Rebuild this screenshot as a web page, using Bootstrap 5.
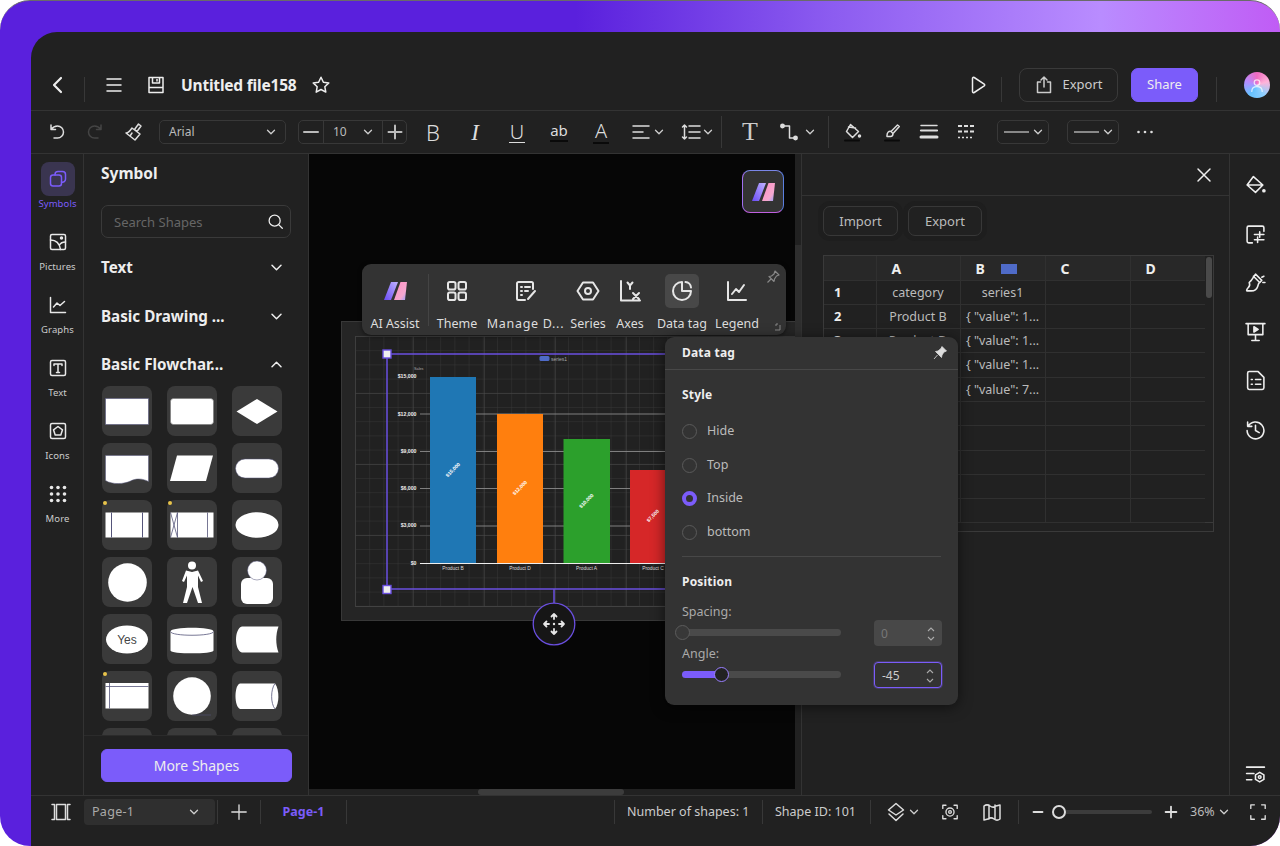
<!DOCTYPE html>
<html lang="en">
<head>
<meta charset="utf-8">
<title>Untitled file158</title>
<link href="https://cdn.jsdelivr.net/npm/bootstrap@5.3.0/dist/css/bootstrap.min.css" rel="stylesheet">
<style>
html,body{margin:0;background:#fff;width:1280px;height:846px;overflow:hidden}
body{font-family:"Noto Sans","Liberation Sans",sans-serif;color:#ddd;font-size:13px}
.frame{width:1280px;height:846px;border-radius:30px;overflow:hidden;padding:31px 0 0 31px;border-top:1px solid #6a6a6a;background:linear-gradient(90deg,#5a20dd 0%,#5a20dd 45%,#8c5cf0 65%,#b98cff 86%,#c05cf5 100%)}
.app{width:1249px;height:814px;background:#212121;border-radius:26px 0 0 0;display:flex;flex-direction:column}
.ic{width:20px;height:20px;fill:none;stroke:currentColor;stroke-width:1.5;stroke-linecap:round;stroke-linejoin:round;flex:none}
.chv{width:10px;height:10px;color:#ccc;flex:none}
.vd{width:1px;background:#383838;flex:none;align-self:center}
.hd{height:79px;padding-top:36px;padding-right:10px;border-bottom:1px solid #333;color:#eee;flex:none}
.hd>div,.hd>button{height:34px}
.b1{width:53px;padding-left:1px}.vd.h25{height:25px}
.b2{width:57px}.b3{width:28px}.ttl{margin-left:11px;font-weight:700;font-size:15.5px;letter-spacing:-.2px;width:120px;white-space:nowrap;line-height:34px}
.b4{width:36px;margin-left:2px}
.b5{width:38px}
.ex-btn{margin-left:17px;width:99px;--bs-btn-padding-x:0;--bs-btn-padding-y:0;--bs-btn-color:#ccc;--bs-btn-border-color:#3a3a3a;--bs-btn-hover-color:#ccc;--bs-btn-font-size:13px;--bs-btn-border-radius:8px}
.sh-btn{margin-left:13px;width:67px;--bs-btn-bg:#7b5cfa;--bs-btn-color:#eee;--bs-btn-border-color:#7b5cfa;--bs-btn-padding-x:0;--bs-btn-padding-y:0;--bs-btn-font-size:13px;--bs-btn-border-radius:7px}
.ml18{margin-left:18px}
.avt{width:26px;height:26px!important;border-radius:50%;margin-left:27px;background:conic-gradient(#f06bc0,#ffb3d9,#8fd0ff,#66c2ff,#b58cff,#f06bc0);color:#fff;margin-top:4px}
.avt .ic{width:16px;height:16px;opacity:.75}
.tb{height:43px;border-bottom:1px solid #333;padding-left:7px;color:#ddd;flex:none}
.ti{height:42px;flex:none}
.w38{width:38px}.w42{width:42px}.w36{width:36px}
.dim{color:#444}
.ghost{height:24px;border:1px solid #383838;border-radius:5px;flex:none;font-size:12px;color:#bbb}
.fsel{width:127px;margin-left:7px;padding:0 9px}
.sgrp{width:109px;margin-left:12px}
.sgrp>span{height:22px}
.s1{width:24px}.s2{width:60px;padding:0 9px 0 9px;border-left:1px solid #383838;border-right:1px solid #383838}.s3{width:23px}
.ml5{margin-left:5px}
.tg{line-height:1;color:#ddd;display:block;text-align:center}
.tg-b{font-size:22px;font-weight:300}
.tg-i{font-family:"Liberation Serif",serif;font-style:italic;font-size:23px}
.tg-u{font-size:20px;font-weight:300;line-height:20px;border-bottom:1.5px solid #ddd;padding:0 1px;height:21px}
.tg-ab{font-size:15px;line-height:17px;border-bottom:2px solid #0a0a0a;height:20px}
.tg-a{font-size:20px;font-weight:300;line-height:20px;border-bottom:2px solid #0a0a0a;height:23px;padding:0 2px}
.tg-t{font-family:"Liberation Serif",serif;font-size:26px;line-height:26px;color:#ccc}
.alg{width:38px;margin-left:4px;gap:3px}
.lsp{width:40px;margin-left:9px;gap:2px}
.vd.h32{height:32px}
.conn{width:40px;margin-left:10px;gap:6px}
.ml9b{margin-left:9px}
.ml2b{margin-left:2px}
.lsel{width:52px;padding:0 5px 0 6px;gap:4px}
.ml12{margin-left:12px}.ml18b{margin-left:18px}
.lsel i{display:block;height:1.5px;width:28px;background:#888}
.dots{width:36px;margin-left:8px}
.mainr{flex:1 1 0;min-height:0}
.rail{width:53px;padding-top:8px;padding-left:1px;border-right:1px solid #333;flex:none;color:#e8e8e8}
.ri{height:63px;width:51px}
.rb{width:34px;height:34px;border-radius:8px}
.rb.on{background:#3a3550;color:#7b5cfa}
.rl{font-size:9.5px;line-height:13px;margin-top:1px;color:#ccc;letter-spacing:.1px}
.rl.on{color:#7b5cfa}
.side{width:225px;border-right:1px solid #333;flex:none}
.sbody{flex:1 1 0;min-height:0;overflow:hidden;padding:0 17px}
.stitle{height:38px;line-height:38px;font-weight:700;font-size:15.500px;color:#eee}
.ssrch{margin-top:13px;width:190px;position:relative}
.ssrch .form-control{height:33px;background:transparent;border:1px solid #3a3a3a;border-radius:7px;color:#ccc;font-size:13px;padding:0 12px;box-shadow:none}
.ssrch .form-control::placeholder{color:#666}
.ssrch .ic{position:absolute;right:7px;top:8px;width:17px;height:17px;color:#eee}
.shd{height:30px;font-weight:700;font-size:15.200px;color:#eee;margin-bottom:19px;width:186px}
.shd.first{margin-top:14px}
.shd.mid{margin-bottom:18.500px}
.shd.last{margin-bottom:6.500px}
.shd .ic{width:15px;height:15px;margin-right:3px}
.tiles{display:grid;grid-template-columns:repeat(3,50px);gap:7px 15px;margin-left:1px}
.tile{height:50px;background:#3a3a3a;border-radius:8px}
.tile svg{display:block;width:50px;height:50px}
.sfoot{height:60px;border-top:1px solid #2b2b2b;padding:13px 0 0 17px;flex:none}
.ms-btn{width:191px;height:33px;--bs-btn-bg:#7b5cfa;--bs-btn-color:#eee;--bs-btn-border-color:#7b5cfa;--bs-btn-padding-x:0;--bs-btn-padding-y:0;--bs-btn-font-size:14px;--bs-btn-border-radius:6px}
.stagew{width:486px;flex:none;position:relative;z-index:2;display:flex;flex-direction:column}
.view{flex:1 1 0;background:#060606;position:relative;overflow:hidden}
.view svg.chart{position:absolute;left:0;top:0;width:486px;height:635px}
.hsb{height:6px;flex:none}
.hsb i{display:block;margin-left:169px;width:146px;height:6px;background:#3c3c3c;border-radius:3px}
.vsb{width:7px;flex:none;border-right:1px solid #333}
.vsb i{display:block;margin-top:91px;width:6px;height:95px;background:#2e2e2e}
.logo{position:absolute;left:433px;top:16px;width:42px;height:43px;border-radius:8px;background:#333;border:1.5px solid;border-color:#7a86e8 #5a7fe0 #c060e0 #a070f0}
.logo svg{width:24px;height:24px}
.ftb{position:absolute;left:53px;top:110px;width:424px;height:71px;background:#333;border-radius:9px;box-shadow:0 1px 4px rgba(0,0,0,.5);color:#e6e6e6}
.fi{height:71px;padding-top:10px;flex:none}
.fi .box{height:34px;width:34px;border-radius:5px}
.fi .box .ic{width:24px;height:24px;stroke-width:2}
.fi .box.on{background:#484848}
.fi span.lb{font-size:12.5px;line-height:16px;margin-top:8px;white-space:nowrap;color:#ddd}
.fi span.lb.wd{letter-spacing:.7px}
.fa{width:66px}.fb{width:56px}.fc{width:81px}.fd{width:44px}.fe{width:40px}.ff{width:64px}.fg{width:46px}
.vd.h52{height:52px;background:#444}
.pin{position:absolute;right:6px;top:6px;width:14px;height:14px;color:#888}
.grip{position:absolute;right:5px;bottom:4px;width:9px;height:9px;color:#888}
.pop{position:absolute;left:356px;top:183px;width:293px;height:368px;background:#333;border-radius:9px;box-shadow:0 2px 14px rgba(0,0,0,.55);font-size:12.5px}
.phd{height:33px;border-bottom:1px solid #484848;padding:0 11px 0 17px;font-weight:700;font-size:12px;color:#eee;letter-spacing:.2px}
.phd svg{width:14px;height:14px;color:#ddd}
.pbd{padding:0 17px}
.pst{font-weight:700;font-size:12px;color:#eee;letter-spacing:.2px;height:18px;line-height:18px}
.pst.a{margin-top:16px;margin-bottom:10.500px}
.rrow{height:33.7px;margin:0;padding:0;min-height:0}
.rrow .form-check-input{width:15px;height:15px;margin:0 10px 0 0;float:none;background-color:transparent;border:1.5px solid #5a5a5a;box-shadow:none;flex:none}
.rrow .form-check-input:checked{background-image:none;background-color:#333;border:4px solid #7b5cfa}
.rrow .form-check-label{color:#bbb;opacity:1}
.phr{border:0;border-top:1px solid #484848;margin:6.500px 0 16px;opacity:1}
.pl{color:#aaa;line-height:16px;height:16px;margin-top:13px}
.pl.b{margin-top:0}
.srow{height:26px}
.trk{width:159px;height:7px;border-radius:4px;background:#4a4a4a;position:relative;flex:none}
.trk b{display:block;height:7px;border-radius:4px;background:#7b5cfa}
.knob{position:absolute;top:-4px;width:15px;height:15px;border-radius:50%;background:#383838;border:1.5px solid #5c5c5c}
.knob.on{background:#222;border-color:#9a80ff}
.num{width:68px;height:26px;margin-left:33px;border-radius:4px;background:#484848;padding:2px 6px 0 7px;color:#777;font-size:12px;flex:none}
.num.on{background:#333;border:1px solid #7b5cfa;color:#ccc;box-shadow:0 0 0 1px rgba(123,92,250,.25)}
.num svg{width:10px;height:18px;color:#aaa}
.panel{width:428px;flex:none;border-right:1px solid #333}
.pnh{height:42px;border-bottom:1px solid #333;padding-right:17px}
.pnh .ic{width:16px;height:16px;color:#eee}
.pnb{padding:10px 0 0 21px}
.ghb{height:30px;--bs-btn-padding-x:0;--bs-btn-padding-y:0;--bs-btn-color:#bbb;--bs-btn-border-color:#383838;--bs-btn-font-size:13px;--bs-btn-border-radius:7px;box-shadow:0 0 0 5px #1e1e1e;padding-top:2px}
.gi{width:75px}.ge{width:74px;margin-left:10px}
.dtw{margin-top:19px;width:391px;height:277px;border:1px solid #3a3a3a;background:linear-gradient(#3a3a3a,#3a3a3a) 0 266px/100% 1px no-repeat}
.dtw .dscr{width:9px;flex:none}
.dtw .dscr i{display:block;width:6px;height:41px;margin:1px 0 0 1px;background:#4a4a4a;border-radius:3px}
.dtable{table-layout:fixed;width:381px;margin:0;border-collapse:collapse;--bs-table-bg:transparent;--bs-table-color:#bbb;--bs-table-border-color:#303030}
.dtable th,.dtable td{padding:0;height:24.3px;line-height:23px;border:1px solid #303030;font-size:12.5px;white-space:nowrap;overflow:hidden;text-align:center;color:#bbb;font-weight:400;box-shadow:none}
.dtable thead th{height:24px;background:#282828;color:#eee;font-weight:700;font-size:14px;text-align:left;padding-left:15px}
.dtable td.n{text-align:left;padding-left:10px;font-weight:700;color:#eee;font-size:13px}
.dtable tr>*:first-child{border-left:0}.dtable tr>*:last-child{border-right:0}.dtable thead th{border-top:0}
.c1{width:52px}.c2{width:84px}.c3{width:85px}.c4{width:85px}.c5{width:75px}
.sw{display:inline-block;width:16px;height:10px;background:#4f6bc8;margin-left:16px}
.rrail{width:50px;flex:none;color:#eee;padding-top:7px}
.rr{height:48.800px}
.rr .ic{width:21px;height:21px}
.rr.end{margin-top:auto;height:42px}
.sb{height:51px;flex:none;border-top:1px solid #333;padding-top:3px;color:#ddd}
.sb>*{height:26px;flex:none}
.vd.h26{height:24px;align-self:flex-start;margin-top:1px}
.sa{width:53px;padding-left:7px}
.psel{width:131px;background:#2f2f2f;border-radius:4px;padding:0 16px 0 8px;font-size:12.5px;color:#aaa;letter-spacing:.3px}
.ml2{margin-left:2px}
.sp{width:42px}.stab{width:85px;color:#7b5cfa;font-weight:700;font-size:12.5px}
.grow{flex:1 1 0}
.st1{width:147px;padding-left:12px;font-size:12.5px;white-space:nowrap;color:#ccc}
.st2{width:107px;padding-left:12px;font-size:12.5px;white-space:nowrap;color:#ccc}
.sl{width:58px;padding-left:15px;gap:3px}
.w42b{width:42px}.w5{width:5px}
.zm{width:32px}.zs{width:101px;position:relative}
.zs i{display:block;height:4px;width:93px;margin-left:8px;background:#3c3c3c;border-radius:2px}
.zs b{position:absolute;left:1px;top:6px;width:14px;height:14px;border-radius:50%;background:#212121;border:2px solid #ddd}
.zp{width:38px}.zt{width:45px;font-size:12.5px;gap:4px;white-space:nowrap;color:#bbb}
.zf{width:45px}
.sb .ic{width:18px;height:18px}
.sb .ic.lg{width:20px;height:20px}
</style>
</head>
<body>
<svg class="d-none" xmlns="http://www.w3.org/2000/svg">
<symbol id="chev" viewBox="0 0 10 10"><path d="M1.500 3.200 5 6.800l3.500-3.600" fill="none" stroke="currentColor" stroke-width="1.300" stroke-linecap="round" stroke-linejoin="round"/></symbol>
<symbol id="star" viewBox="0 0 20 20"><path d="M10 2.200l2.400 5 5.400.7-4 3.800 1 5.400-4.800-2.600-4.800 2.600 1-5.400-4-3.800 5.400-.7z"/></symbol>
</svg>
<div class="frame">
<div class="app">

<header class="hd d-flex">
  <div class="b1 d-flex align-items-center justify-content-center"><svg class="ic" viewBox="0 0 20 20"><path d="M13 3 6 10l7 7" stroke-width="2.200"/></svg></div>
  <div class="vd h25"></div>
  <div class="b2 d-flex align-items-center justify-content-center"><svg class="ic" viewBox="0 0 20 20"><path d="M3 4h14M3 10h14M3 16h14"/></svg></div>
  <div class="b3 d-flex align-items-center justify-content-center"><svg class="ic" viewBox="0 0 20 20"><path d="M3 2.500h14v15H3zM6.500 2.500v5.500h7v-5.500M3 12.500h14"/><path d="M11 4.500v1.500" /></svg></div>
  <div class="ttl">Untitled file158</div>
  <div class="b4 d-flex align-items-center justify-content-center"><svg class="ic"><use href="#star"/></svg></div>
  <div class="grow flex-grow-1"></div>
  <div class="b5 d-flex align-items-center justify-content-center"><svg class="ic" viewBox="0 0 20 20"><path d="M4.500 3.500c0-1 .9-1.400 1.700-1l10 6.600c.7.500.7 1.300 0 1.800l-10 6.600c-.8.400-1.700 0-1.700-1z"/></svg></div>
  <div class="vd h25 ms-1"></div>
  <button class="btn ex-btn d-flex align-items-center justify-content-center gap-2" type="button"><svg class="ic" viewBox="0 0 20 20"><path d="M6.500 7H3.500v10.500h13V7h-3M10 12V2.500M7 5l3-3 3 3"/></svg>Export</button>
  <button class="btn sh-btn" type="button">Share</button>
  <div class="vd h25 ml18"></div>
  <div class="avt d-flex align-items-center justify-content-center"><svg class="ic" viewBox="0 0 20 20"><circle cx="10" cy="7" r="3.500"/><path d="M3.500 18c0-4 3-6 6.500-6s6.500 2 6.500 6"/></svg></div>
</header>

<div class="tb d-flex align-items-center">
  <div class="ti w38 d-flex align-items-center justify-content-center"><svg class="ic" viewBox="0 0 20 20"><path d="M4 3v4.500h4.500M4.300 7.300C6 5 8 4 10.500 4c3.300 0 6 2.700 6 6s-2.700 6-6 6H7"/></svg></div>
  <div class="ti w38 d-flex align-items-center justify-content-center dim"><svg class="ic" viewBox="0 0 20 20"><path d="M16 3v4.500h-4.500M15.700 7.300C14 5 12 4 9.500 4c-3.300 0-6 2.700-6 6s2.700 6 6 6H13"/></svg></div>
  <div class="ti w38 d-flex align-items-center justify-content-center"><svg class="ic" viewBox="0 0 20 20"><path d="M11.500 7.500 15.500 2l2.500 2-4 5.500zM9 6l8 6-5 6-9-7c2 0 4-2 6-5zM7 14l2-3"/></svg></div>
  <div class="ghost fsel d-flex align-items-center justify-content-between"><span>Arial</span><svg class="chv"><use href="#chev"/></svg></div>
  <div class="ghost sgrp d-flex align-items-center">
    <span class="s1 d-flex align-items-center justify-content-center"><svg class="ic" viewBox="0 0 20 20"><path d="M3 10h14" stroke-width="2"/></svg></span>
    <span class="s2 d-flex align-items-center justify-content-between"><span>10</span><svg class="chv"><use href="#chev"/></svg></span>
    <span class="s3 d-flex align-items-center justify-content-center"><svg class="ic" viewBox="0 0 20 20"><path d="M3.500 10h13M10 3.500v13" stroke-width="2"/></svg></span>
  </div>
  <div class="ti w42 ml5 d-flex align-items-center justify-content-center"><span class="tg tg-b">B</span></div>
  <div class="ti w42 d-flex align-items-center justify-content-center"><span class="tg tg-i">I</span></div>
  <div class="ti w42 d-flex align-items-center justify-content-center"><span class="tg tg-u">U</span></div>
  <div class="ti w42 d-flex align-items-center justify-content-center"><span class="tg tg-ab">ab</span></div>
  <div class="ti w42 d-flex align-items-center justify-content-center"><span class="tg tg-a">A</span></div>
  <div class="ti alg d-flex align-items-center justify-content-end"><svg class="ic" viewBox="0 0 20 20"><path d="M2 4h16M2 10h10M2 16h16"/></svg><svg class="chv"><use href="#chev"/></svg></div>
  <div class="ti lsp d-flex align-items-center justify-content-end"><svg class="ic" viewBox="0 0 20 20"><path d="M8 4h11M8 10h11M8 16h11M3.500 3v14M1.500 5l2-2 2 2M1.500 15l2 2 2-2"/></svg><svg class="chv"><use href="#chev"/></svg></div>
  <div class="vd h32 ms-2"></div>
  <div class="ti w38 d-flex align-items-center justify-content-center ml9b"><span class="tg tg-t">T</span></div>
  <div class="ti conn d-flex align-items-center"><svg class="ic" viewBox="0 0 20 20"><circle cx="3.500" cy="4" r="1.700" fill="currentColor"/><circle cx="16.500" cy="16" r="1.700" fill="currentColor"/><path d="M5 4h5.500v12H15"/></svg><svg class="chv"><use href="#chev"/></svg></div>
  <div class="vd h32 ml9b"></div>
  <div class="ti w38 d-flex align-items-center justify-content-center ms-1"><svg class="ic" viewBox="0 0 20 20"><path d="M8.500 2.500l8 7-6 6-6-6zM6.500 5l7 1"/><circle cx="17.500" cy="14" r="1" fill="currentColor"/><path d="M3 18.500h14" stroke="#0a0a0a" stroke-width="2"/></svg></div>
  <div class="ti w38 d-flex align-items-center justify-content-center ml2b"><svg class="ic" viewBox="0 0 20 20"><path d="M9 9.500 15.500 3l1.800 1.500L11 11.500zM9 9.500c-2-.5-4 .5-4 4v1h3.500c2 0 2.500-1.500 2.500-3"/><path d="M3 18.500h14" stroke="#0a0a0a" stroke-width="2"/></svg></div>
  <div class="ti w36 d-flex align-items-center justify-content-center"><svg class="ic" viewBox="0 0 20 20"><path d="M2 3.500h16" stroke-width="1.500"/><path d="M2 8.500h16" stroke-width="2.200"/><path d="M2 15h16" stroke-width="3"/></svg></div>
  <div class="ti w38 d-flex align-items-center justify-content-center"><svg class="ic" viewBox="0 0 20 20"><path d="M2 4h16M2 9.500h16" stroke-width="2" stroke-dasharray="4 2" stroke-linecap="butt"/><path d="M2 15.500h16" stroke-width="1.500" stroke-dasharray="2 2" stroke-linecap="butt"/></svg></div>
  <div class="ghost lsel ml12 d-flex align-items-center"><i></i><svg class="chv"><use href="#chev"/></svg></div>
  <div class="ghost lsel ml18b d-flex align-items-center"><i></i><svg class="chv"><use href="#chev"/></svg></div>
  <div class="ti dots ms-2 d-flex align-items-center justify-content-center"><svg class="ic" viewBox="0 0 20 20"><circle cx="3.500" cy="10" r="1.300" fill="currentColor" stroke="none"/><circle cx="10" cy="10" r="1.300" fill="currentColor" stroke="none"/><circle cx="16.500" cy="10" r="1.300" fill="currentColor" stroke="none"/></svg></div>
</div>

<div class="mainr d-flex">
  <nav class="rail d-flex flex-column">
    <div class="ri d-flex flex-column align-items-center"><div class="rb on d-flex align-items-center justify-content-center"><svg class="ic" viewBox="0 0 20 20"><rect x="2.500" y="6" width="11" height="11" rx="2.500"/><path d="M7 6V5.500A3 3 0 0 1 10 2.500h4.500a3 3 0 0 1 3 3V10a3 3 0 0 1-4 3"/></svg></div><div class="rl on">Symbols</div></div>
    <div class="ri d-flex flex-column align-items-center"><div class="rb d-flex align-items-center justify-content-center"><svg class="ic" viewBox="0 0 20 20"><rect x="2.500" y="2.500" width="15" height="15" rx="1.500"/><path d="M2.500 8c5 0 9 3 10 9.500M11.500 13c1-2 3-3 6-3"/><circle cx="13.500" cy="6" r="1" fill="currentColor"/></svg></div><div class="rl">Pictures</div></div>
    <div class="ri d-flex flex-column align-items-center"><div class="rb d-flex align-items-center justify-content-center"><svg class="ic" viewBox="0 0 20 20"><path d="M2.500 2.500v15h15M5.500 12l3.500-4 3 2.500 4.500-4"/></svg></div><div class="rl">Graphs</div></div>
    <div class="ri d-flex flex-column align-items-center"><div class="rb d-flex align-items-center justify-content-center"><svg class="ic" viewBox="0 0 20 20"><rect x="2.500" y="2.500" width="15" height="15" rx="1.500"/><path d="M6 7.500V6h8v1.500M10 6v8.500M8.500 14.500h3"/></svg></div><div class="rl">Text</div></div>
    <div class="ri d-flex flex-column align-items-center"><div class="rb d-flex align-items-center justify-content-center"><svg class="ic" viewBox="0 0 20 20"><rect x="2.500" y="2.500" width="15" height="15" rx="1.500"/><path d="M10 5.500l4.500 3.300-1.700 5.200H7.200L5.500 8.800z"/></svg></div><div class="rl">Icons</div></div>
    <div class="ri d-flex flex-column align-items-center"><div class="rb d-flex align-items-center justify-content-center"><svg class="ic" viewBox="0 0 20 20"><g fill="currentColor" stroke="none"><circle cx="3.500" cy="3.500" r="1.800"/><circle cx="10" cy="3.500" r="1.800"/><circle cx="16.500" cy="3.500" r="1.800"/><circle cx="3.500" cy="10" r="1.800"/><circle cx="10" cy="10" r="1.800"/><circle cx="16.500" cy="10" r="1.800"/><circle cx="3.500" cy="16.500" r="1.800"/><circle cx="10" cy="16.500" r="1.800"/><circle cx="16.500" cy="16.500" r="1.800"/></g></svg></div><div class="rl">More</div></div>
  </nav>

  <aside class="side d-flex flex-column">
    <div class="sbody">
      <div class="stitle">Symbol</div>
      <div class="ssrch"><input class="form-control" type="text" placeholder="Search Shapes" aria-label="Search Shapes"><svg class="ic" viewBox="0 0 20 20"><circle cx="9" cy="9" r="6.500"/><path d="M14 14l4 4"/></svg></div>
      <div class="shd first d-flex align-items-center justify-content-between"><span>Text</span><svg class="ic" viewBox="0 0 20 20"><path d="M4 7l6 6 6-6" stroke-width="2"/></svg></div>
      <div class="shd mid d-flex align-items-center justify-content-between"><span>Basic Drawing ...</span><svg class="ic" viewBox="0 0 20 20"><path d="M4 7l6 6 6-6" stroke-width="2"/></svg></div>
      <div class="shd last d-flex align-items-center justify-content-between"><span>Basic Flowchar...</span><svg class="ic" viewBox="0 0 20 20"><path d="M4 13l6-6 6 6" stroke-width="2"/></svg></div>
      <div class="tiles">
        <div class="tile"><svg viewBox="0 0 50 50"><rect x="3.500" y="12.500" width="43" height="26" fill="#fff" stroke="#55557a" stroke-width=".6"/></svg></div>
        <div class="tile"><svg viewBox="0 0 50 50"><rect x="3.500" y="12.500" width="43" height="26" rx="3" fill="#fff" stroke="#777" stroke-width=".6"/></svg></div>
        <div class="tile"><svg viewBox="0 0 50 50"><path d="M4.500 25.500 25 13l20.500 12.500L25 38z" fill="#fff"/></svg></div>
        <div class="tile"><svg viewBox="0 0 50 50"><path d="M3.500 12.500h43v26c-6-3-12-3.500-18-.5s-18 4-25-.5z" fill="#fff" stroke="#55557a" stroke-width=".5"/></svg></div>
        <div class="tile"><svg viewBox="0 0 50 50"><path d="M10 12.500h36L39 38H3z" fill="#fff"/></svg></div>
        <div class="tile"><svg viewBox="0 0 50 50"><rect x="3.500" y="16" width="43" height="19" rx="9.500" fill="#fff" stroke="#55557a" stroke-width=".5"/></svg></div>
        <div class="tile"><svg viewBox="0 0 50 50"><circle cx="3" cy="3" r="2" fill="#e8c34a"/><rect x="3.500" y="12.500" width="43" height="25" fill="#fff"/><path d="M9.500 12.500v25M40.500 12.500v25" stroke="#55557a"/></svg></div>
        <div class="tile"><svg viewBox="0 0 50 50"><circle cx="3" cy="3" r="2" fill="#e8c34a"/><rect x="3.500" y="12.500" width="43" height="25" fill="#fff"/><path d="M10.500 12.500v25M40.500 12.500v25M3.500 37.500l7-25M3.500 12.500l7 25" stroke="#55557a" stroke-width=".8"/></svg></div>
        <div class="tile"><svg viewBox="0 0 50 50"><ellipse cx="25" cy="25" rx="21.500" ry="12.800" fill="#fff"/></svg></div>
        <div class="tile"><svg viewBox="0 0 50 50"><circle cx="25.500" cy="25.500" r="19.300" fill="#fff"/></svg></div>
        <div class="tile"><svg viewBox="0 0 50 50"><circle cx="25" cy="8.500" r="4" fill="#fff"/><path d="M19 13.500l6 1.500 6-1.500 5 10.500-2 1-3-6.500v11.500l4 16h-4l-5.500-16-5.500 16h-4l4-16V18.500l-3 6.500-2-1z" fill="#fff"/></svg></div>
        <div class="tile"><svg viewBox="0 0 50 50"><rect x="9" y="21" width="32" height="26" rx="6" fill="#fff"/><circle cx="25" cy="13.500" r="9.500" fill="#fff" stroke="#55557a" stroke-width=".5"/></svg></div>
        <div class="tile"><svg viewBox="0 0 50 50"><ellipse cx="25" cy="25.500" rx="21" ry="14" fill="#fff"/><text x="25" y="30" text-anchor="middle" font-size="12" font-family="Liberation Sans, sans-serif" fill="#444">Yes</text></svg></div>
        <div class="tile"><svg viewBox="0 0 50 50"><path d="M3.500 17.500c0-5 43-5 43 0v19c0 3.800-43 3.800-43 0z" fill="#fff"/><path d="M3.500 17.500c0 5 43 5 43 0" fill="none" stroke="#55557a" stroke-width=".8"/></svg></div>
        <div class="tile"><svg viewBox="0 0 50 50"><path d="M10 12.500h36.500c-3 8-3 18 0 26H10c-8-2-8-24 0-26z" fill="#fff"/></svg></div>
        <div class="tile"><svg viewBox="0 0 50 50"><circle cx="3" cy="3" r="2" fill="#e8c34a"/><rect x="3.500" y="12" width="43" height="25.500" fill="#fff"/><path d="M3.500 15.500h43M7.500 12v25.500" stroke="#55557a" stroke-width=".8"/></svg></div>
        <div class="tile"><svg viewBox="0 0 50 50"><circle cx="25" cy="25" r="18.800" fill="#fff"/><path d="M25 44h19" stroke="#55557a" stroke-width=".6"/></svg></div>
        <div class="tile"><svg viewBox="0 0 50 50"><path d="M8 12.500h35c4.500 6 4.500 20 0 25.500H8c-6-2-6-24 0-25.500z" fill="#fff"/><path d="M43 12.500c-4.500 6-4.500 20 0 25.500" fill="none" stroke="#55557a" stroke-width=".8"/></svg></div>
        <div class="tile"></div><div class="tile"></div><div class="tile"></div>
      </div>
    </div>
    <div class="sfoot"><button class="btn ms-btn" type="button">More Shapes</button></div>
  </aside>

  <section class="stagew">
    <div class="view">
      <svg class="chart" viewBox="309 154 486 635" font-family="Liberation Sans, sans-serif">
        <defs>
          <pattern id="gmin" x="355" y="336" width="14.200" height="14.200" patternUnits="userSpaceOnUse"><path d="M14.200 0H0V14.200" fill="none" stroke="#383838" stroke-width=".9"/></pattern>
          <pattern id="gmaj" x="342" y="322" width="71" height="71" patternUnits="userSpaceOnUse"><path d="M71 0H0V71" fill="none" stroke="#4a4a4a" stroke-width="1"/></pattern>
        </defs>
        <rect x="341.500" y="321.500" width="500" height="299" fill="#252525" stroke="#383838"/>
        <rect x="355.500" y="336.500" width="480" height="270" fill="#212121" stroke="#404040"/>
        <rect x="355.500" y="336.500" width="480" height="270" fill="url(#gmin)"/>
        <rect x="355.500" y="336.500" width="480" height="270" fill="url(#gmaj)"/>
        <g stroke="#8a8a8a" stroke-width=".9"><path d="M420 414h280M420 451.500h280M420 488.500h280M420 526h280"/></g>
        <path d="M420 563.500h280" stroke="#eee" stroke-width="1"/>
        <rect x="430" y="377" width="46" height="186" fill="#1f77b4"/>
        <rect x="497" y="414" width="46" height="149" fill="#ff7f0e"/>
        <rect x="563.500" y="439" width="46.500" height="124" fill="#2ca02c"/>
        <rect x="630" y="470" width="47" height="93" fill="#d62728"/>
        <g fill="#eee" font-size="5.200" font-weight="700" text-anchor="end">
          <text x="416.500" y="377.500">$15,000</text><text x="416.500" y="415.500">$12,000</text><text x="416.500" y="452.500">$9,000</text><text x="416.500" y="490">$6,000</text><text x="416.500" y="527">$3,000</text><text x="416.500" y="565">$0</text>
        </g>
        <text x="414" y="369.500" fill="#aaa" font-size="3.800">Sales</text>
        <g fill="#ddd" font-size="4.900" text-anchor="middle">
          <text x="453" y="569.500">Product B</text><text x="520" y="569.500">Product D</text><text x="586.500" y="569.500">Product A</text><text x="653" y="569.500">Product C</text>
        </g>
        <g fill="#fff" font-size="5" font-weight="700" text-anchor="middle">
          <text transform="translate(453 470) rotate(-45)" y="1.500">$15,000</text>
          <text transform="translate(520 488) rotate(-45)" y="1.500">$12,000</text>
          <text transform="translate(586.500 501) rotate(-45)" y="1.500">$10,000</text>
          <text transform="translate(653 516) rotate(-45)" y="1.500">$7,500</text>
        </g>
        <rect x="539.500" y="356" width="10" height="5" rx="1.500" fill="#4f6bc8"/>
        <text x="551" y="360.500" fill="#aaa" font-size="5">series1</text>
        <g fill="none" stroke="#6a4fe0" stroke-width="1.500"><path d="M387 354H800M387 354V589M387 589H800M554 589v14"/></g>
        <g fill="#eee" stroke="#6a4fe0" stroke-width="1.400"><rect x="383" y="350" width="8" height="8"/><rect x="383" y="585.500" width="8" height="8"/></g>
        <circle cx="554" cy="624" r="20.800" fill="#161616" stroke="#6a4fe0" stroke-width="1.300"/>
        <g fill="none" stroke="#e6e6e6" stroke-width="1.800" stroke-linecap="round" stroke-linejoin="round"><path d="M554 614v5M554 629v5M544 624h5M559 624h5M551.500 616.500l2.500-2.500 2.500 2.500M551.500 631.500l2.500 2.500 2.500-2.500M546.500 621.500l-2.500 2.500 2.500 2.500M561.500 621.500l2.500 2.500-2.500 2.500"/></g>
        <circle cx="554" cy="624" r="1.200" fill="#e6e6e6"/>
      </svg>
    </div>
    <div class="hsb"><i></i></div>

    <div class="logo d-flex align-items-center justify-content-center"><svg viewBox="0 0 24 24"><defs><linearGradient id="lga" x1="0" x2="1" y1="1" y2="0"><stop offset="0" stop-color="#6a4cf5"/><stop offset="1" stop-color="#c0b2ff"/></linearGradient><linearGradient id="lgb" x1="0" x2="1" y1="0" y2="1"><stop offset="0" stop-color="#ff8fc0"/><stop offset=".7" stop-color="#f5a8d0"/><stop offset="1" stop-color="#8f9cff"/></linearGradient></defs><path d="M8 3h7L8 21H1z" fill="url(#lga)"/><path d="M17.500 3H24l-2 18H11z" fill="url(#lgb)"/></svg></div>

    <div class="ftb d-flex">
      <div class="fi fa d-flex flex-column align-items-center"><div class="box d-flex align-items-center justify-content-center"><svg viewBox="0 0 24 24" width="24" height="24"><path d="M8 3h7L8 21H1z" fill="url(#lga)"/><path d="M17.500 3H24l-2 18H11z" fill="url(#lgb)"/></svg></div><span class="lb">AI Assist</span></div>
      <div class="vd h52"></div>
      <div class="fi fb d-flex flex-column align-items-center"><div class="box d-flex align-items-center justify-content-center"><svg class="ic" viewBox="0 0 24 24"><rect x="3" y="3" width="7.500" height="7.500" rx="1.800"/><rect x="13.500" y="3" width="7.500" height="7.500" rx="1.800"/><rect x="3" y="13.500" width="7.500" height="7.500" rx="1.800"/><rect x="13.500" y="13.500" width="7.500" height="7.500" rx="1.800"/></svg></div><span class="lb">Theme</span></div>
      <div class="fi fc d-flex flex-column align-items-center"><div class="box d-flex align-items-center justify-content-center"><svg class="ic" viewBox="0 0 24 24"><path d="M19 10V4.500A1.500 1.500 0 0 0 17.500 3h-13A1.500 1.500 0 0 0 3 4.500v15A1.500 1.500 0 0 0 4.500 21H11M7 8h1M11 8h5M7 12h1M11 12h3M7 16h1M14 20l7-8"/></svg></div><span class="lb wd">Manage D...</span></div>
      <div class="fi fd d-flex flex-column align-items-center"><div class="box d-flex align-items-center justify-content-center"><svg class="ic" viewBox="0 0 24 24"><path d="M7 3.500h10L22.500 12 17 20.500H7L1.500 12z"/><circle cx="12" cy="12" r="3"/></svg></div><span class="lb">Series</span></div>
      <div class="fi fe d-flex flex-column align-items-center"><div class="box d-flex align-items-center justify-content-center"><svg class="ic" viewBox="0 0 24 24"><path d="M3 2v19.500h19M9.500 3.500l2.500 3 2.500-3M12 6.500V10M15 14l6 6M21 14l-6 6"/></svg></div><span class="lb">Axes</span></div>
      <div class="fi ff d-flex flex-column align-items-center"><div class="box on d-flex align-items-center justify-content-center"><svg class="ic" viewBox="0 0 24 24"><path d="M12 3a9 9 0 1 0 9 9h-9zM15.500 3a6 6 0 0 1 5.500 5.500" /></svg></div><span class="lb">Data tag</span></div>
      <div class="fi fg d-flex flex-column align-items-center"><div class="box d-flex align-items-center justify-content-center"><svg class="ic" viewBox="0 0 24 24"><path d="M3 3v18h18M7 15l4-5 3 3 5-7"/></svg></div><span class="lb">Legend</span></div>
      <svg class="pin" viewBox="0 0 14 14"><path d="M9 1l4 4-2.500 1-2 3-.5 2.500L3 6.500l2.500-.5 2.500-2zM5 9l-3.500 3.500" fill="none" stroke="currentColor" stroke-width="1.200" stroke-linejoin="round"/></svg>
      <svg class="grip" viewBox="0 0 9 9"><path d="M8 3v5H3M5 1v2H3" fill="none" stroke="currentColor" stroke-width="1"/></svg>
    </div>

    <div class="pop">
      <div class="phd d-flex align-items-center justify-content-between"><span>Data tag</span><svg viewBox="0 0 14 14"><path d="M9 .5l4.500 4.500-2.500 1-2 3-.5 2.500L2.500 5.500 5 5l3-2.500zM4.500 9 1 13" fill="currentColor" stroke="currentColor" stroke-width=".8"/></svg></div>
      <div class="pbd">
        <div class="pst a">Style</div>
        <div class="form-check rrow d-flex align-items-center"><input class="form-check-input" type="radio" name="st" id="r1"><label class="form-check-label" for="r1">Hide</label></div>
        <div class="form-check rrow d-flex align-items-center"><input class="form-check-input" type="radio" name="st" id="r2"><label class="form-check-label" for="r2">Top</label></div>
        <div class="form-check rrow d-flex align-items-center"><input class="form-check-input" type="radio" name="st" id="r3" checked><label class="form-check-label" for="r3">Inside</label></div>
        <div class="form-check rrow d-flex align-items-center"><input class="form-check-input" type="radio" name="st" id="r4"><label class="form-check-label" for="r4">bottom</label></div>
        <hr class="phr">
        <div class="pst">Position</div>
        <div class="pl">Spacing:</div>
        <div class="srow d-flex align-items-center">
          <div class="trk"><span class="knob" style="left:-7px"></span></div>
          <div class="num d-flex align-items-center justify-content-between"><span>0</span><svg viewBox="0 0 10 18"><path d="M2 6l3-3 3 3M2 12l3 3 3-3" fill="none" stroke="currentColor" stroke-width="1.100"/></svg></div>
        </div>
        <div class="pl b">Angle:</div>
        <div class="srow d-flex align-items-center">
          <div class="trk"><b style="width:39px"></b><span class="knob on" style="left:32px"></span></div>
          <div class="num on d-flex align-items-center justify-content-between"><span>-45</span><svg viewBox="0 0 10 18"><path d="M2 6l3-3 3 3M2 12l3 3 3-3" fill="none" stroke="currentColor" stroke-width="1.100"/></svg></div>
        </div>
      </div>
    </div>
  </section>

  <div class="vsb"><i></i></div>

  <section class="panel d-flex flex-column">
    <div class="pnh d-flex align-items-center justify-content-end"><svg class="ic" viewBox="0 0 16 16"><path d="M2 2l12 12M14 2 2 14"/></svg></div>
    <div class="pnb">
      <div class="d-flex"><button class="btn ghb gi" type="button">Import</button><button class="btn ghb ge" type="button">Export</button></div>
      <div class="dtw d-flex align-items-start">
        <table class="table dtable">
          <colgroup><col class="c1"><col class="c2"><col class="c3"><col class="c4"><col class="c5"></colgroup>
          <thead><tr><th></th><th>A</th><th>B<span class="sw"></span></th><th>C</th><th>D</th></tr></thead>
          <tbody>
            <tr><td class="n">1</td><td>category</td><td>series1</td><td></td><td></td></tr>
            <tr><td class="n">2</td><td>Product B</td><td>{ "value": 1...</td><td></td><td></td></tr>
            <tr><td class="n">3</td><td>Product D</td><td>{ "value": 1...</td><td></td><td></td></tr>
            <tr><td class="n">4</td><td>Product A</td><td>{ "value": 1...</td><td></td><td></td></tr>
            <tr><td class="n">5</td><td>Product C</td><td>{ "value": 7...</td><td></td><td></td></tr>
            <tr><td></td><td></td><td></td><td></td><td></td></tr>
            <tr><td></td><td></td><td></td><td></td><td></td></tr>
            <tr><td></td><td></td><td></td><td></td><td></td></tr>
            <tr><td></td><td></td><td></td><td></td><td></td></tr>
            <tr><td></td><td></td><td></td><td></td><td></td></tr>
          </tbody>
        </table>
        <div class="dscr"><i></i></div>
      </div>
    </div>
  </section>

  <aside class="rrail d-flex flex-column">
    <div class="rr d-flex align-items-center justify-content-center"><svg class="ic" viewBox="0 0 20 20"><path d="M8 1.500l9 8-7 7-8-7zM2 9.500l14 0"/><circle cx="18" cy="15" r="1" fill="currentColor"/></svg></div>
    <div class="rr d-flex align-items-center justify-content-center"><svg class="ic" viewBox="0 0 20 20"><path d="M18 7V3.500A1.500 1.500 0 0 0 16.500 2h-13A1.500 1.500 0 0 0 2 3.500v13A1.500 1.500 0 0 0 3.500 18H7M9 10h9M9 15h9M14 7.500v5M12 12.500v5"/></svg></div>
    <div class="rr d-flex align-items-center justify-content-center"><svg class="ic" viewBox="0 0 20 20"><path d="M10 2l6 6-3 3-1 3c-1 3-3 4-6 4H2c-1 0 0-2 1-3 1.500-1.500 2-3 1-5l2-2z"/><path d="M16 5l2-1M17 10h2M8 4l6 6"/></svg></div>
    <div class="rr d-flex align-items-center justify-content-center"><svg class="ic" viewBox="0 0 20 20"><path d="M1 2.500h18M3 2.500v10.500h14V2.500M10 13v5M6.500 18.500h7"/><path d="M8.500 5.500l4 2.500-4 2.500z" fill="currentColor"/></svg></div>
    <div class="rr d-flex align-items-center justify-content-center"><svg class="ic" viewBox="0 0 20 20"><path d="M4 1.500h8.500L18 7v10a1.500 1.500 0 0 1-1.500 1.500h-12.500A1.500 1.500 0 0 1 2.500 17V3A1.500 1.500 0 0 1 4 1.500zM6 9h1M10 9h5M6 13.500h1M10 13.500h5"/></svg></div>
    <div class="rr d-flex align-items-center justify-content-center"><svg class="ic" viewBox="0 0 20 20"><path d="M2.500 3v4h4M3 7a8 8 0 1 1-1 4M10 6v5l3.500 2"/></svg></div>
    <div class="rr end d-flex align-items-center justify-content-center"><svg class="ic" viewBox="0 0 20 20"><path d="M1.500 3h17M1.500 9h7M1.500 15h5"/><path d="M14 8l4 2.300v4.400L14 17l-4-2.300v-4.400z"/><circle cx="14" cy="12.500" r="1.300"/></svg></div>
  </aside>
</div>

<footer class="sb d-flex">
  <div class="sa d-flex align-items-center justify-content-center"><svg class="ic lg" viewBox="0 0 20 20"><rect x="5.500" y="2.500" width="9" height="15"/><path d="M1 2.500h2.500v15H1M19 2.500h-2.500v15H19"/></svg></div>
  <div class="psel d-flex align-items-center justify-content-between"><span>Page-1</span><svg class="chv"><use href="#chev"/></svg></div>
  <div class="vd h26 ml2"></div>
  <div class="sp d-flex align-items-center justify-content-center"><svg class="ic" viewBox="0 0 20 20"><path d="M2 10h16M10 2v16"/></svg></div>
  <div class="vd h26"></div>
  <div class="stab d-flex align-items-center justify-content-center">Page-1</div>
  <div class="vd h26"></div>
  <div class="flex-grow-1 grow"></div>
  <div class="vd h26"></div>
  <div class="st1 d-flex align-items-center">Number of shapes: 1</div>
  <div class="vd h26"></div>
  <div class="st2 d-flex align-items-center">Shape ID: 101</div>
  <div class="vd h26"></div>
  <div class="sl d-flex align-items-center"><svg class="ic lg" viewBox="0 0 20 20"><path d="M10 1.500l7.500 6.500L10 13 2.500 8zM3 12l7 6.500 7-6.500"/></svg><svg class="chv"><use href="#chev"/></svg></div>
  <div class="w42b d-flex align-items-center justify-content-center"><svg class="ic" viewBox="0 0 20 20"><path d="M2 6V2.500h3.500M14.500 2.500H18V6M18 14v3.500h-3.500M5.500 17.500H2V14"/><circle cx="10" cy="10" r="4.500"/><circle cx="10" cy="10" r="1.500"/></svg></div>
  <div class="w42b d-flex align-items-center justify-content-center"><svg class="ic lg" viewBox="0 0 20 20"><path d="M2 4c2-1.500 4-1.500 6 0s4 1.500 6 0l4-1v14c-2 1.500-4 1.500-6 0s-4-1.500-6 0l-4 1zM7 3v14M13 3v14"/></svg></div>
  <div class="w5"></div>
  <div class="vd h26"></div>
  <div class="zm d-flex align-items-center justify-content-end pe-1"><svg class="ic" viewBox="0 0 20 20"><path d="M5 10h10" stroke-width="2"/></svg></div>
  <div class="zs d-flex align-items-center"><i></i><b></b></div>
  <div class="zp d-flex align-items-center justify-content-center"><svg class="ic" viewBox="0 0 20 20"><path d="M4 10h12M10 4v12" stroke-width="2"/></svg></div>
  <div class="zt d-flex align-items-center"><span>36%</span><svg class="chv"><use href="#chev"/></svg></div>
  <div class="zf d-flex align-items-center justify-content-center"><svg class="ic" viewBox="0 0 20 20"><path d="M2 6V2h4M14 2h4v4M18 14v4h-4M6 18H2v-4"/></svg></div>
</footer>

</div>
</div>
<script src="https://cdn.jsdelivr.net/npm/bootstrap@5.3.0/dist/js/bootstrap.bundle.min.js"></script>
</body>
</html>
